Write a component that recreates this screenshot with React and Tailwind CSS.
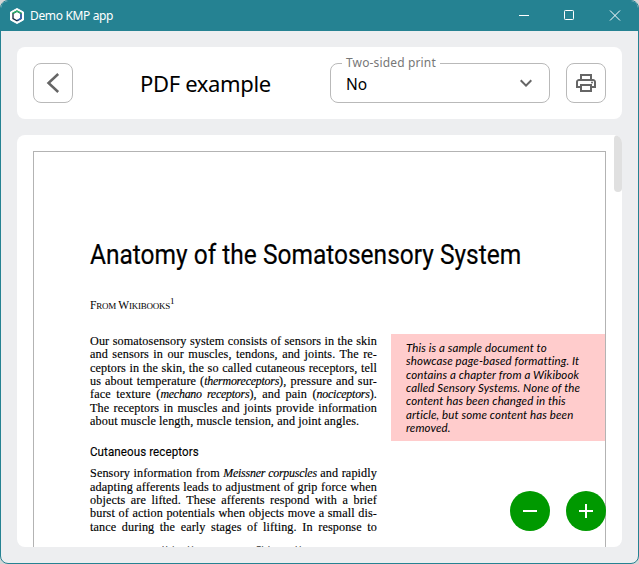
import React from 'react';

const iconButton =
  'flex h-10 w-10 shrink-0 items-center justify-center rounded-lg border border-[#b9b9b9] bg-white text-[#666]';

function TitleBar() {
  return (
    <div className="flex h-[30px] shrink-0 items-center bg-[#258292] pl-2 text-white">
      <svg width="16" height="16" viewBox="0 0 16 16" className="shrink-0">
        <path d="M8 .5 14.5 4v8L8 15.5 1.5 12V4Z" fill="#fff" stroke="#fff" strokeLinejoin="round" />
        <path d="M8 3.2 4 5.3v5.2L8 12.7l4-2.2V5.3Z" fill="#fff" stroke="#10253a" strokeWidth="1.3" />
        <path d="M3.5 5.4 8 3.1l4.5 2.3" fill="none" stroke="#2bb36b" strokeWidth="1.5" />
        <path d="M12 6v4.4l-3.5 2" fill="none" stroke="#3567b5" strokeWidth="1.5" />
      </svg>
      <span className="ml-[5px] font-['Noto_Sans',sans-serif] text-[12px] leading-4 tracking-[-0.35px]">Demo KMP app</span>
      <div className="ml-auto flex items-center">
        <svg width="137" height="30" viewBox="0 0 137 30" fill="none" stroke="#fff">
          <path d="M18 14.5h10" />
          <rect x="63.5" y="9.5" width="9" height="9" rx=".8" />
          <path d="m109 9.5 10 10m0-10-10 10" />
        </svg>
      </div>
    </div>
  );
}

function Toolbar() {
  return (
    <div className="flex h-[72px] shrink-0 items-center rounded-lg bg-white px-4">
      <button className={iconButton}>
        <svg width="24" height="24" viewBox="0 0 24 24" fill="none" stroke="currentColor" strokeWidth="2.5">
          <path d="M17.2 3 7.5 12l9.7 9" />
        </svg>
      </button>
      <h1 className="flex-1 whitespace-nowrap pl-2 text-center font-['Noto_Sans',sans-serif] text-[22px] leading-8 tracking-[-0.35px] text-black">
        PDF example
      </h1>
      <div className="relative flex h-10 w-[220px] shrink-0 items-center rounded-lg border border-[#b9b9b9] pl-[15px]">
        <span className="absolute -top-[9px] left-[11px] whitespace-nowrap bg-white px-1 font-['Noto_Sans',sans-serif] text-[12px] leading-4 tracking-[0.15px] text-[#777]">
          Two-sided print
        </span>
        <span className="pt-px font-['Noto_Sans',sans-serif] text-[15.5px] leading-6 text-black">No</span>
        <svg className="ml-auto mr-[11px]" width="24" height="24" viewBox="0 0 24 24" fill="#666">
          <path d="M7.41 8.59 12 13.17l4.59-4.58L18 10l-6 6-6-6z" />
        </svg>
      </div>
      <button className={iconButton + ' ml-4'}>
        <svg width="24" height="24" viewBox="0 0 24 24" fill="currentColor">
          <path d="M19 8h-1V3H6v5H5c-1.66 0-3 1.34-3 3v6h4v4h12v-4h4v-6c0-1.66-1.34-3-3-3zM8 5h8v3H8V5zm8 12v2H8v-4h8v2zm2-2v-2H6v2H4v-4c0-.55.45-1 1-1h14c.55 0 1 .45 1 1v4h-2z" />
          <circle cx="18" cy="11.5" r="1" />
        </svg>
      </button>
    </div>
  );
}

function Line({ children, last = false }) {
  return (
    <div className={last ? 'whitespace-nowrap' : 'whitespace-nowrap [text-align-last:justify]'}>{children}</div>
  );
}

function Page() {
  return (
    <article className="mt-4 h-[500px] w-[573px] shrink-0 border border-[#b3b3b3] pl-[56px] pt-[85px] text-black">
      <h2 className="w-[500px] origin-left scale-x-[0.875] whitespace-nowrap font-[Roboto,sans-serif] text-[28px] leading-9 [-webkit-text-stroke:0.2px_#000]">
        Anatomy of the Somatosensory System
      </h2>
      <p className="mt-[24px] whitespace-nowrap font-['Liberation_Serif',serif] text-[11.5px] leading-4 tracking-[-0.25px]">
        F<span className="text-[9px]">ROM</span> W<span className="text-[9px]">IKIBOOKS</span>
        <span className="relative -top-[5px] text-[9px]">1</span>
      </p>
      <div className="mt-5 flex">
        <div className="w-[287px] shrink-0 pt-[1px] font-['Liberation_Serif',serif] text-[12.2px] leading-[13.35px] tracking-[0.11px] [-webkit-text-stroke:0.15px_#000] [&_i]:text-[11.9px] [&_i]:tracking-[-0.22px]">
          <Line>Our somatosensory system consists of sensors in the skin</Line>
          <Line>and sensors in our muscles, tendons, and joints. The re-</Line>
          <Line>ceptors in the skin, the so called cutaneous receptors, tell</Line>
          <Line>us about temperature (<i>thermoreceptors</i>), pressure and sur-</Line>
          <Line>face texture (<i>mechano receptors</i>), and pain (<i>nociceptors</i>).</Line>
          <Line>The receptors in muscles and joints provide information</Line>
          <Line last>about muscle length, muscle tension, and joint angles.</Line>
          <h3 className="mt-[16px] w-[140px] origin-left scale-x-[0.89] whitespace-nowrap font-[Roboto,sans-serif] text-[13px] leading-4 tracking-[0.1px]">
            Cutaneous receptors
          </h3>
          <div className="mt-[7px]">
            <Line>Sensory information from <i>Meissner corpuscles</i> and rapidly</Line>
            <Line>adapting afferents leads to adjustment of grip force when</Line>
            <Line>objects are lifted. These afferents respond with a brief</Line>
            <Line>burst of action potentials when objects move a small dis-</Line>
            <Line>tance during the early stages of lifting. In response to</Line>
          </div>
          <div className="mt-[10px] flex gap-[54px] whitespace-nowrap pl-[72px] font-[Roboto,sans-serif] text-[8px] leading-[10px] text-[#555]">
            <span className="w-10">Hairy skin</span>
            <span>Glabrous skin</span>
          </div>
        </div>
        <aside className="ml-[14px] h-[107px] w-[214px] shrink-0 whitespace-nowrap bg-[#fcc] pl-[15px] pt-[7px] font-[Lato,sans-serif] text-[11.5px] italic leading-[13.35px] tracking-[0.11px]">
          This is a sample document to<br />
          showcase page-based formatting. It<br />
          contains a chapter from a Wikibook<br />
          called Sensory Systems. None of the<br />
          content has been changed in this<br />
          article, but some content has been<br />
          removed.
        </aside>
      </div>
    </article>
  );
}

function ZoomButton({ plus = false }) {
  return (
    <button className="flex h-10 w-10 items-center justify-center rounded-full bg-[#090]">
      <svg width="24" height="24" viewBox="0 0 24 24" stroke="#fff" strokeWidth="2">
        <path d={plus ? 'M5 12h14M12 5v14' : 'M5 12h14'} />
      </svg>
    </button>
  );
}

export default function App() {
  return (
    <div className="h-[564px] w-[639px] overflow-hidden bg-[#d6d6d6]">
      <div className="flex h-full w-full flex-col overflow-hidden rounded-lg border border-[#258292] bg-[#edeef0]">
        <TitleBar />
        <main className="flex flex-1 flex-col gap-4 px-4 pt-4">
          <Toolbar />
          <section className="relative flex h-[412px] shrink-0 items-start overflow-hidden rounded-lg bg-white pl-4">
            <Page />
            <div className="ml-2 h-[57px] w-2 rounded-full bg-[#e0e0e0]" />
            <div className="absolute bottom-4 right-4 flex gap-4">
              <ZoomButton />
              <ZoomButton plus />
            </div>
          </section>
        </main>
      </div>
    </div>
  );
}
